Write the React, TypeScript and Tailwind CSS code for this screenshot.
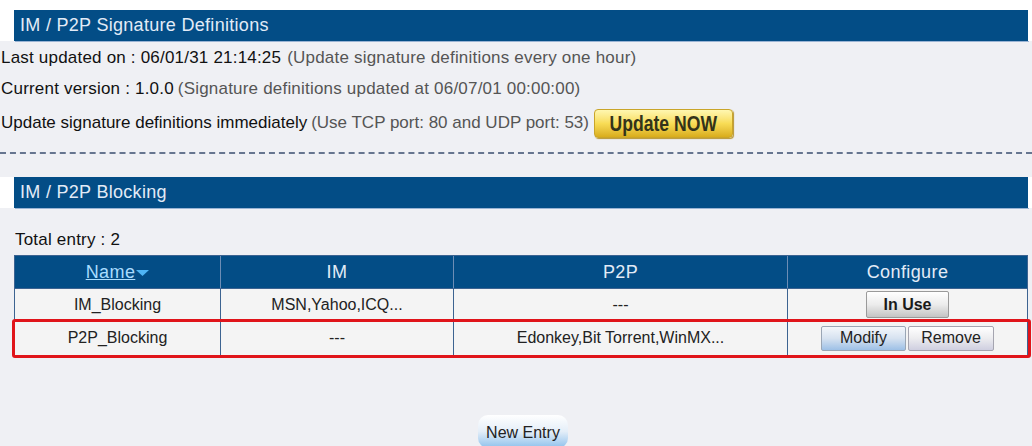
import React from "react";

function Header({ title }: { title: string }) {
  return (
    <div className="flex h-[31px]">
      <div className="w-[14px] bg-white" />
      <div className="w-[1014px] bg-[#034d86] flex items-center pl-[6px] text-[18px] tracking-[0.3px] text-[#e2ebf7] shadow-[1px_1px_0_#9ab4d4]">
        {title}
      </div>
      <div className="flex-1 bg-white" />
    </div>
  );
}

function GreyBtn({ children, bold, w }: { children: React.ReactNode; bold?: boolean; w: string }) {
  return (
    <div
      className={`${w} h-[27px] flex items-center justify-center border border-[#9a9a9a] rounded-[2px] bg-gradient-to-b from-[#ffffff] via-[#ececec] to-[#c4c4c4] text-[16px] text-[#1a1a1a] ${bold ? "font-bold" : ""}`}
    >
      {children}
    </div>
  );
}

export default function App() {
  const font = { fontFamily: '"Liberation Sans", Arial, sans-serif' };
  return (
    <div className="w-[1032px] h-[446px] overflow-hidden bg-[#eff0f4] text-[17px] tracking-[0.2px] text-[#111]" style={font}>
      <div className="h-[10px] bg-white" />
      <Header title="IM / P2P Signature Definitions" />

      <div className="h-[32px] flex items-center pl-[1px] pt-[2px]">
        <span>Last updated on : 06/01/31 21:14:25</span>
        <span className="ml-[6px] text-[#555]">(Update signature definitions every one hour)</span>
      </div>
      <div className="h-[32px] flex items-center pl-[1px]">
        <span>Current version : 1.0.0</span>
        <span className="ml-[4px] text-[#555]">(Signature definitions updated at 06/07/01 00:00:00)</span>
      </div>
      <div className="h-[36px] flex items-center pl-[1px] tracking-[0px]">
        <span>Update signature definitions immediately</span>
        <span className="ml-[4px] text-[#555]">(Use TCP port: 80 and UDP port: 53)</span>
        <div className="ml-[5px] w-[139px] h-[29px] rounded-[4px] border border-[#c9a52a] bg-gradient-to-b from-[#fff7b0] via-[#f8dc55] to-[#d9ad1a] flex items-center justify-center shadow-[1px_1px_1px_#b89530]">
          <span className="inline-block scale-x-[0.8] text-[22px] font-bold text-[#33331a]">
            Update NOW
          </span>
        </div>
      </div>

      <div className="mt-[11px] border-t-2 border-dashed border-[#66758f]" />

      <div className="mt-[23px]">
        <Header title="IM / P2P Blocking" />
      </div>

      <div className="mt-[22px] h-[20px] flex items-center pl-[15px]">Total entry : 2</div>

      <div className="mt-[5px] ml-[14px] w-[1014px] border border-[#3c6391]">
        <div className="grid grid-cols-[206px_233px_334px_1fr] h-[32px] bg-[#034d86] text-[18px] tracking-[0.4px] text-[#e2ebf7]">
          <div className="flex items-center justify-center border-r border-[#6d8db5]">
            <span className="underline text-[#a9dcff]">Name</span>
            <svg width="13" height="8" viewBox="0 0 13 8" className="ml-[1px] mt-[1px]">
              <polygon points="0,1 13,1 6.5,7" fill="#4fb5f5" />
            </svg>
          </div>
          <div className="flex items-center justify-center border-r border-[#6d8db5]">IM</div>
          <div className="flex items-center justify-center border-r border-[#6d8db5]">P2P</div>
          <div className="flex items-center justify-center">Configure</div>
        </div>

        <div className="grid grid-cols-[206px_233px_334px_1fr] h-[32px] bg-[#f4f4f4] border-t border-[#3c6391] text-[16px] tracking-[0px] text-[#222]">
          <div className="flex items-center justify-center border-r border-[#3c6391]">IM_Blocking</div>
          <div className="flex items-center justify-center border-r border-[#3c6391]">MSN,Yahoo,ICQ...</div>
          <div className="flex items-center justify-center border-r border-[#3c6391]">---</div>
          <div className="flex items-center justify-center">
            <GreyBtn bold w="w-[83px]">In Use</GreyBtn>
          </div>
        </div>

        <div className="relative grid grid-cols-[206px_233px_334px_1fr] h-[35px] bg-[#f4f4f4] border-t border-[#3c6391] text-[16px] tracking-[0px] text-[#222]">
          <div className="flex items-center justify-center border-r border-[#3c6391]">P2P_Blocking</div>
          <div className="flex items-center justify-center border-r border-[#3c6391]">---</div>
          <div className="flex items-center justify-center border-r border-[#3c6391]">Edonkey,Bit Torrent,WinMX...</div>
          <div className="flex items-center justify-center gap-[2px]">
            <div className="w-[85px] h-[25px] flex items-center justify-center border border-[#9aa6b5] rounded-[2px] bg-gradient-to-b from-[#f4f7fb] via-[#d6e2f0] to-[#9dc0e6]">
              Modify
            </div>
            <div className="w-[86px] h-[25px] flex items-center justify-center border border-[#a5a5b0] rounded-[2px] bg-gradient-to-b from-[#ffffff] via-[#ececef] to-[#cfcfe0]">
              Remove
            </div>
          </div>
          <div className="absolute left-[-3px] right-[-4px] top-[-2px] bottom-[-3px] border-[3px] border-[#e0141a] rounded-[3px] pointer-events-none" />
        </div>
      </div>

      <div className="mt-[59px] flex justify-center pl-[14px]">
        <div className="w-[90px] h-[33px] rounded-[10px] flex items-start justify-center pt-[6px] bg-gradient-to-b from-[#ffffff] via-[#e4eef8] to-[#8ec1ec] text-[16px] tracking-[0px] text-[#222]">
          New Entry
        </div>
      </div>
    </div>
  );
}
